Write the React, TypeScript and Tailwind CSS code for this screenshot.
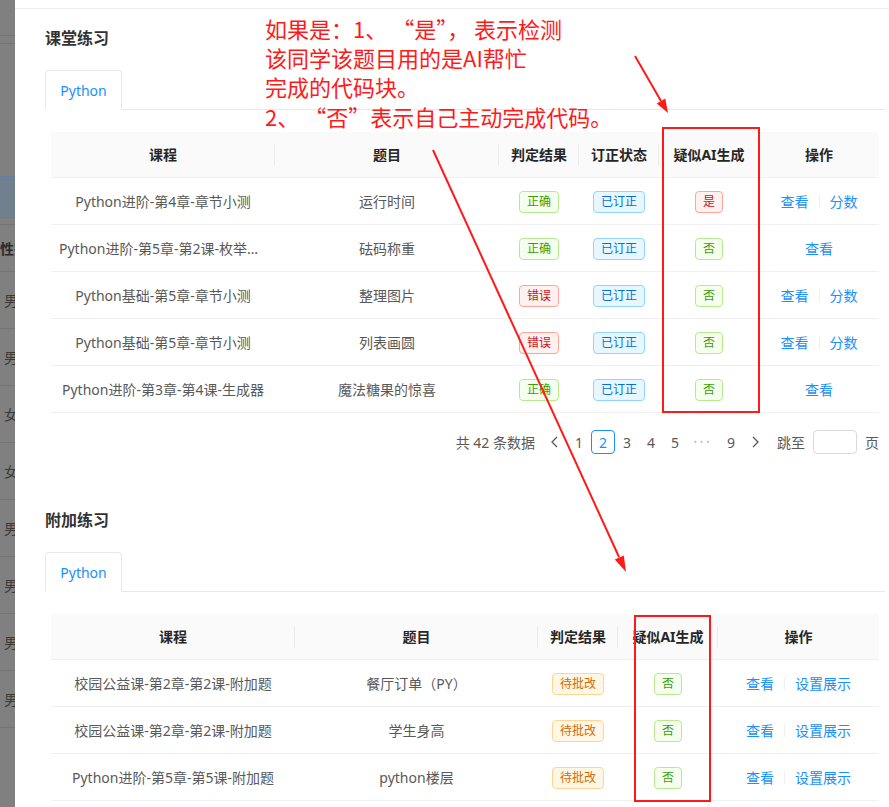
import React from 'react';

type Tone = 'green' | 'red' | 'blue' | 'orange';

const toneClass: Record<Tone, string> = {
  green: 'bg-[#f6ffed] border-[#b7eb8f] text-[#389e0d]',
  red: 'bg-[#fff1f0] border-[#ffa39e] text-[#cf1322]',
  blue: 'bg-[#e6f7ff] border-[#91d5ff] text-[#096dd9]',
  orange: 'bg-[#fff7e6] border-[#ffd591] text-[#d46b08]',
};

type LessonRow = { course: string; title: string; ok: boolean; ai: boolean; score: boolean };
type ExtraRow = { course: string; title: string };

const lessonRows: LessonRow[] = [
  { course: 'Python进阶-第4章-章节小测', title: '运行时间', ok: true, ai: true, score: true },
  { course: 'Python进阶-第5章-第2课-枚举算法', title: '砝码称重', ok: true, ai: false, score: false },
  { course: 'Python基础-第5章-章节小测', title: '整理图片', ok: false, ai: false, score: true },
  { course: 'Python基础-第5章-章节小测', title: '列表画圆', ok: false, ai: false, score: true },
  { course: 'Python进阶-第3章-第4课-生成器', title: '魔法糖果的惊喜', ok: true, ai: false, score: false },
];

const extraRows: ExtraRow[] = [
  { course: '校园公益课-第2章-第2课-附加题', title: '餐厅订单（PY）' },
  { course: '校园公益课-第2章-第2课-附加题', title: '学生身高' },
  { course: 'Python进阶-第5章-第5课-附加题', title: 'python楼层' },
];

const stripRows = ['男', '男', '女', '女', '男', '男', '男', '男'];

function Tag({ tone, children }: { tone: Tone; children: React.ReactNode }) {
  return (
    <span className={`inline-flex h-[22px] items-center rounded-[4px] border px-[7px] text-[12px] leading-[20px] ${toneClass[tone]}`}>
      {children}
    </span>
  );
}

function Links({ items }: { items: string[] }) {
  return (
    <div className="flex items-center justify-center text-[#1890ff]">
      {items.map((t, i) => (
        <React.Fragment key={t}>
          {i > 0 ? <span className="mx-[10px] h-[13px] w-px bg-[#f0f0f0]" /> : null}
          <span>{t}</span>
        </React.Fragment>
      ))}
    </div>
  );
}

function HeadCell({ label, sep = true }: { label: string; sep?: boolean }) {
  return (
    <div className="relative flex h-full items-center justify-center font-bold text-[#262626]">
      {label}
      {sep ? <span className="absolute right-0 top-[12px] h-[22px] w-px bg-[#ebebeb]" /> : null}
    </div>
  );
}

function Section({ title, children }: { title: string; children: React.ReactNode }) {
  return (
    <section>
      <h2 className="h-[24px] text-[16px] font-bold leading-[24px] text-[#333]">{title}</h2>
      <div className="mt-[20px] flex border-b border-[#e8e8e8]">
        <div className="-mb-px flex h-[40px] w-[77px] items-center justify-center rounded-t-[4px] border border-[#e8e8e8] border-b-white bg-white text-[#1890ff]">
          Python
        </div>
      </div>
      <div className="ml-[6px] mt-[22px] w-[828px]">{children}</div>
    </section>
  );
}

function Chevron({ dir }: { dir: 'left' | 'right' }) {
  return (
    <svg width="10" height="12" viewBox="0 0 10 12" fill="none" stroke="#595959" strokeWidth="1.3">
      {dir === 'left' ? <polyline points="7,1 2,6 7,11" /> : <polyline points="3,1 8,6 3,11" />}
    </svg>
  );
}

function Pagination() {
  const pages = [1, 2, 3, 4, 5];
  return (
    <div className="mt-[17px] flex h-[24px] items-center justify-end text-[#595959]">
      <span className="mr-[8px]">共 42 条数据</span>
      <span className="flex h-[24px] w-[24px] items-center justify-center"><Chevron dir="left" /></span>
      {pages.map((p) => (
        <span
          key={p}
          className={
            p === 2
              ? 'flex h-[24px] w-[24px] items-center justify-center rounded-[4px] border border-[#1890ff] text-[#1890ff]'
              : 'flex h-[24px] w-[24px] items-center justify-center'
          }
        >
          {p}
        </span>
      ))}
      <span className="flex h-[24px] w-[32px] items-center justify-center text-[9px] tracking-[3px] text-[#c4c4c4]">•••</span>
      <span className="flex h-[24px] w-[24px] items-center justify-center">9</span>
      <span className="flex h-[24px] w-[24px] items-center justify-center"><Chevron dir="right" /></span>
      <span className="ml-[10px]">跳至</span>
      <span className="ml-[8px] h-[24px] w-[44px] rounded-[4px] border border-[#d9d9d9] bg-white" />
      <span className="ml-[8px]">页</span>
    </div>
  );
}

export default function App() {
  return (
    <div className="relative flex h-[807px] w-[889px] overflow-hidden bg-white font-['Noto_Sans','Noto_Sans_CJK_SC',sans-serif] text-[14px] text-[#595959]">
      {/* dimmed page behind the drawer */}
      <div className="w-[15px] shrink-0 overflow-hidden whitespace-nowrap bg-[#808080] text-[#2b2b2b]">
        <div className="h-[36px] border-b border-[#747474]" />
        <div className="h-[8px] border-b border-[#767676]" />
        <div className="h-[132px]" />
        <div className="h-[42px] border-y border-[#5f7f9c] bg-[#70808e]" />
        <div className="h-[7px] border-b border-[#747474]" />
        <div className="flex h-[47px] items-center border-b border-[#747474] font-bold">性别</div>
        {stripRows.map((s, i) => (
          <div key={i} className="flex h-[57px] items-center border-b border-[#747474] pl-[4px] text-[#3a3a3a]">
            {s}
          </div>
        ))}
      </div>

      <div className="flex-1 bg-white pl-[30px] pr-[4px]">
        <div className="-ml-[30px] -mr-[4px] h-[9px] border-b border-[#ededed]" />
        <div className="mt-[17px]">
          <Section title="课堂练习">
            <div className="grid h-[46px] grid-cols-[224px_224px_80px_80px_100px_120px] border-b border-[#f0f0f0] bg-[#fafafa]">
              <HeadCell label="课程" />
              <HeadCell label="题目" />
              <HeadCell label="判定结果" />
              <HeadCell label="订正状态" />
              <HeadCell label="疑似AI生成" sep={false} />
              <HeadCell label="操作" sep={false} />
            </div>
            {lessonRows.map((r, i) => (
              <div key={i} className="grid h-[47px] grid-cols-[224px_224px_80px_80px_100px_120px] items-center border-b border-[#f0f0f0] text-center">
                <div className="truncate px-[8px]">{r.course}</div>
                <div>{r.title}</div>
                <div><Tag tone={r.ok ? 'green' : 'red'}>{r.ok ? '正确' : '错误'}</Tag></div>
                <div><Tag tone="blue">已订正</Tag></div>
                <div><Tag tone={r.ai ? 'red' : 'green'}>{r.ai ? '是' : '否'}</Tag></div>
                <Links items={r.score ? ['查看', '分数'] : ['查看']} />
              </div>
            ))}
            <Pagination />
          </Section>
        </div>

        <div className="mt-[54px]">
          <Section title="附加练习">
            <div className="grid h-[46px] grid-cols-[244px_243px_80px_100px_161px] border-b border-[#f0f0f0] bg-[#fafafa]">
              <HeadCell label="课程" />
              <HeadCell label="题目" />
              <HeadCell label="判定结果" />
              <HeadCell label="疑似AI生成" />
              <HeadCell label="操作" sep={false} />
            </div>
            {extraRows.map((r, i) => (
              <div key={i} className="grid h-[47px] grid-cols-[244px_243px_80px_100px_161px] items-center border-b border-[#f0f0f0] text-center">
                <div className="truncate px-[8px]">{r.course}</div>
                <div>{r.title}</div>
                <div><Tag tone="orange">待批改</Tag></div>
                <div><Tag tone="green">否</Tag></div>
                <Links items={['查看', '设置展示']} />
              </div>
            ))}
          </Section>
        </div>
      </div>

      {/* annotation drawn over the screenshot */}
      <div className="pointer-events-none absolute left-[265px] top-[14px] font-['Noto_Sans_CJK_SC',sans-serif] text-[22px] leading-[29px] text-[#ff1a1a]">
        <p>如果是：1、 “是”， 表示检测</p>
        <p>该同学该题目用的是AI帮忙</p>
        <p>完成的代码块。</p>
        <p className="mt-[1px]">2、 “否”表示自己主动完成代码。</p>
      </div>
      <svg className="pointer-events-none absolute left-0 top-0" width="889" height="807" viewBox="0 0 889 807">
        <g stroke="#ff1a1a" fill="none" strokeWidth="2">
          <rect x="663" y="128" width="96" height="284" />
          <rect x="635" y="616" width="75" height="185" />
          <line x1="635" y1="56" x2="661" y2="101" />
          <line x1="433" y1="150" x2="619" y2="557" />
        </g>
        <g fill="#ff1a1a">
          <polygon points="665.3,98.4 656.7,103.4 668,113" />
          <polygon points="623.8,555.4 614.8,559.6 626,572" />
        </g>
      </svg>
    </div>
  );
}
